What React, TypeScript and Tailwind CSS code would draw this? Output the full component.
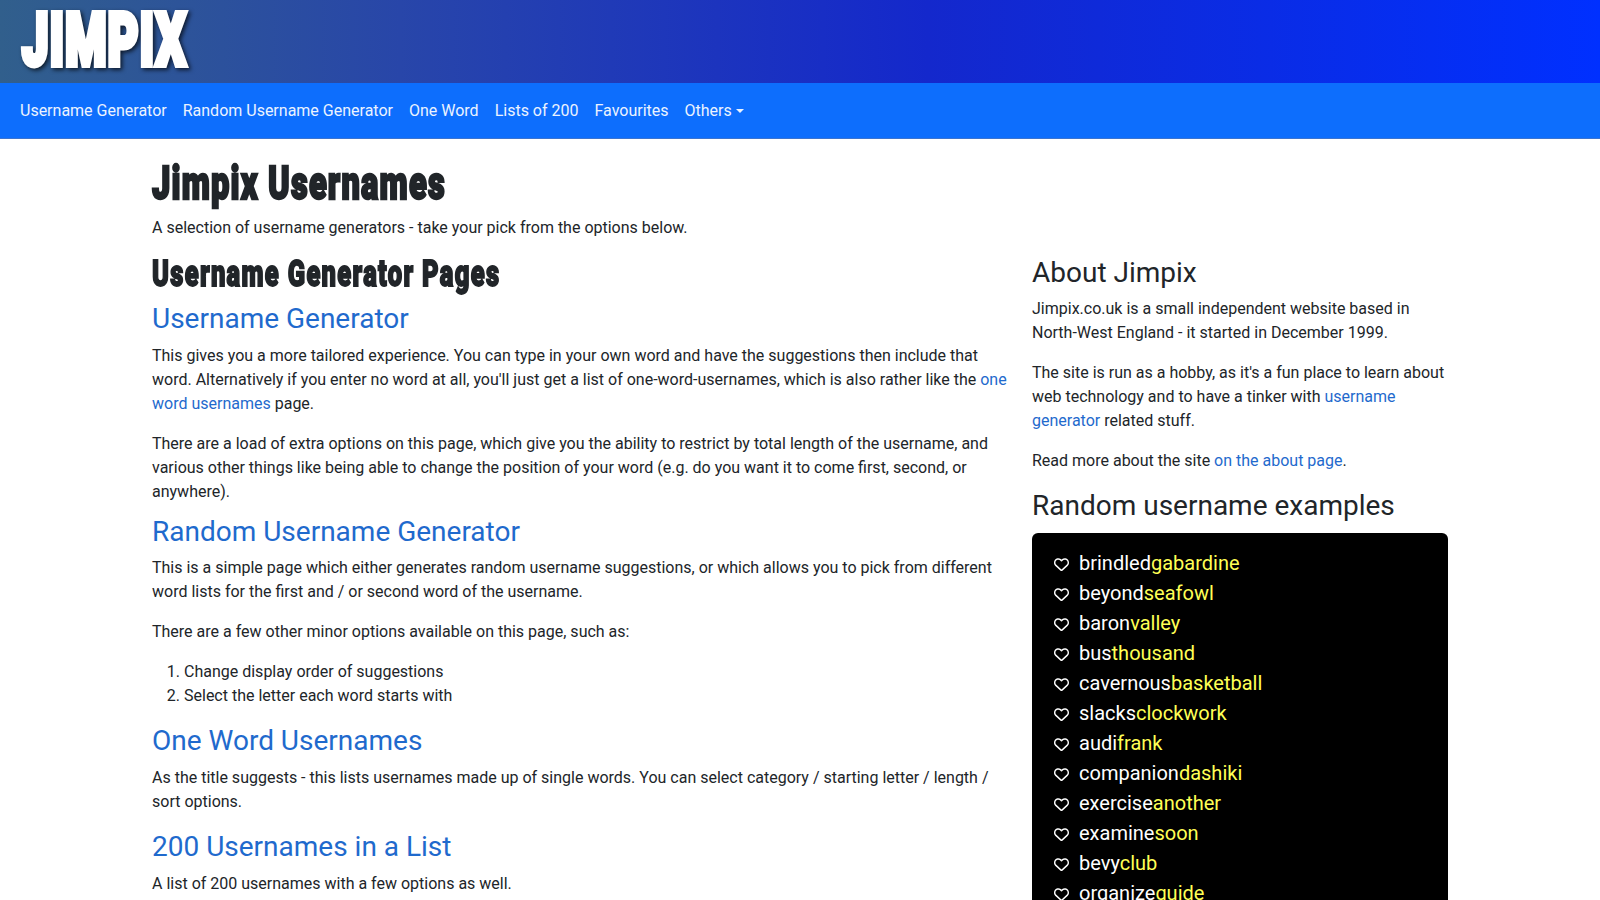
import { FaRegHeart } from 'react-icons/fa6'

const navLinks = ['Username Generator', 'Random Username Generator', 'One Word', 'Lists of 200', 'Favourites']

const usernames = [
  ['brindled', 'gabardine'],
  ['beyond', 'seafowl'],
  ['baron', 'valley'],
  ['bus', 'thousand'],
  ['cavernous', 'basketball'],
  ['slacks', 'clockwork'],
  ['audi', 'frank'],
  ['companion', 'dashiki'],
  ['exercise', 'another'],
  ['examine', 'soon'],
  ['bevy', 'club'],
  ['organize', 'guide'],
]

const linkClass = 'text-[#1f6acd]'
const h3Class = 'mb-2 text-[28px] leading-[33.6px]'

export default function App() {
  return (
    <div className="h-[900px] overflow-hidden bg-white font-['Roboto',sans-serif] text-base leading-6 text-[#212529]">
      <header className="flex h-[83px] items-start bg-[linear-gradient(90deg,#315f8c_0%,#2846a9_25%,#1428cc_58%,#0030ff_100%)]">
        <svg width="200" height="83" aria-label="Jimpix">
          <text
            x="22"
            y="65"
            textLength="165"
            lengthAdjust="spacingAndGlyphs"
            className="fill-white stroke-white stroke-[6] text-[73px] font-black tracking-[2px] [filter:drop-shadow(2px_2px_2px_rgba(0,0,0,0.7))]"
          >
            JIMPIX
          </text>
        </svg>
      </header>

      <nav className="flex h-14 items-center gap-4 border-b border-[#3b74d0] bg-[#0d6efd] px-5 text-[#ebf3ff]">
        {navLinks.map((label) => (
          <a key={label} href="#">
            {label}
          </a>
        ))}
        <a href="#" className="flex items-center gap-1">
          Others
          <span className="border-x-[4px] border-t-[4px] border-x-transparent border-t-[#ebf3ff]" />
        </a>
      </nav>

      <div className="mx-auto w-[1296px] pt-[20.5px]">
        <h1 className="mb-2 h-12 w-max origin-left scale-x-[0.695] text-[47px] leading-[46px] font-black tracking-[1.7px] [-webkit-text-stroke:2.4px_#212529]">
          Jimpix Usernames
        </h1>
        <p className="mb-4">A selection of username generators - take your pick from the options below.</p>

        <div className="flex gap-6">
          <main className="w-[856px]">
            <h2 className="mb-[8.2px] h-[38.4px] w-max origin-left scale-x-[0.69] text-[37px] leading-[36px] font-black tracking-[1.9px] [-webkit-text-stroke:1.8px_#212529]">
              Username Generator Pages
            </h2>

            <h3 className={h3Class}>
              <a href="#" className={linkClass}>Username Generator</a>
            </h3>
            <p className="mb-4">
              This gives you a more tailored experience. You can type in your own word and have the suggestions then
              include that word. Alternatively if you enter no word at all, you'll just get a list of
              one-word-usernames, which is also rather like the{' '}
              <a href="#" className={linkClass}>one word usernames</a> page.
            </p>
            <p className="mb-[11.1px]">
              There are a load of extra options on this page, which give you the ability to restrict by total length of
              the username, and various other things like being able to change the position of your word (e.g. do you
              want it to come first, second, or anywhere).
            </p>

            <h3 className={h3Class}>
              <a href="#" className={linkClass}>Random Username Generator</a>
            </h3>
            <p className="mb-4">
              This is a simple page which either generates random username suggestions, or which allows you to pick from
              different word lists for the first and / or second word of the username.
            </p>
            <p className="mb-4">There are a few other minor options available on this page, such as:</p>
            <ol className="mb-4 list-decimal pl-8">
              <li>Change display order of suggestions</li>
              <li>Select the letter each word starts with</li>
            </ol>

            <h3 className={h3Class}>
              <a href="#" className={linkClass}>One Word Usernames</a>
            </h3>
            <p className="mb-4">
              As the title suggests - this lists usernames made up of single words. You can select category / starting
              letter / length / sort options.
            </p>

            <h3 className={h3Class}>
              <a href="#" className={linkClass}>200 Usernames in a List</a>
            </h3>
            <p>A list of 200 usernames with a few options as well.</p>
          </main>

          <aside className="w-[416px]">
            <h3 className={h3Class}>About Jimpix</h3>
            <p className="mb-4">
              Jimpix.co.uk is a small independent website based in North-West England - it started in December 1999.
            </p>
            <p className="mb-4">
              The site is run as a hobby, as it's a fun place to learn about web technology and to have a tinker with{' '}
              <a href="#" className={linkClass}>username generator</a> related stuff.
            </p>
            <p className="mb-4">
              Read more about the site <a href="#" className={linkClass}>on the about page</a>.
            </p>

            <h3 className={h3Class}>Random username examples</h3>
            <ul className="mt-[10.3px] rounded-md bg-black px-[22px] py-[15px] text-xl leading-[30px] text-white">
              {usernames.map(([first, second]) => (
                <li key={first} className="flex items-center">
                  <FaRegHeart className="mt-[3px] mr-[10px] h-[15px] w-[15px]" aria-hidden="true" />
                  <span>
                    {first}
                    <span className="text-[#ffff55]">{second}</span>
                  </span>
                </li>
              ))}
            </ul>
          </aside>
        </div>
      </div>
    </div>
  )
}
